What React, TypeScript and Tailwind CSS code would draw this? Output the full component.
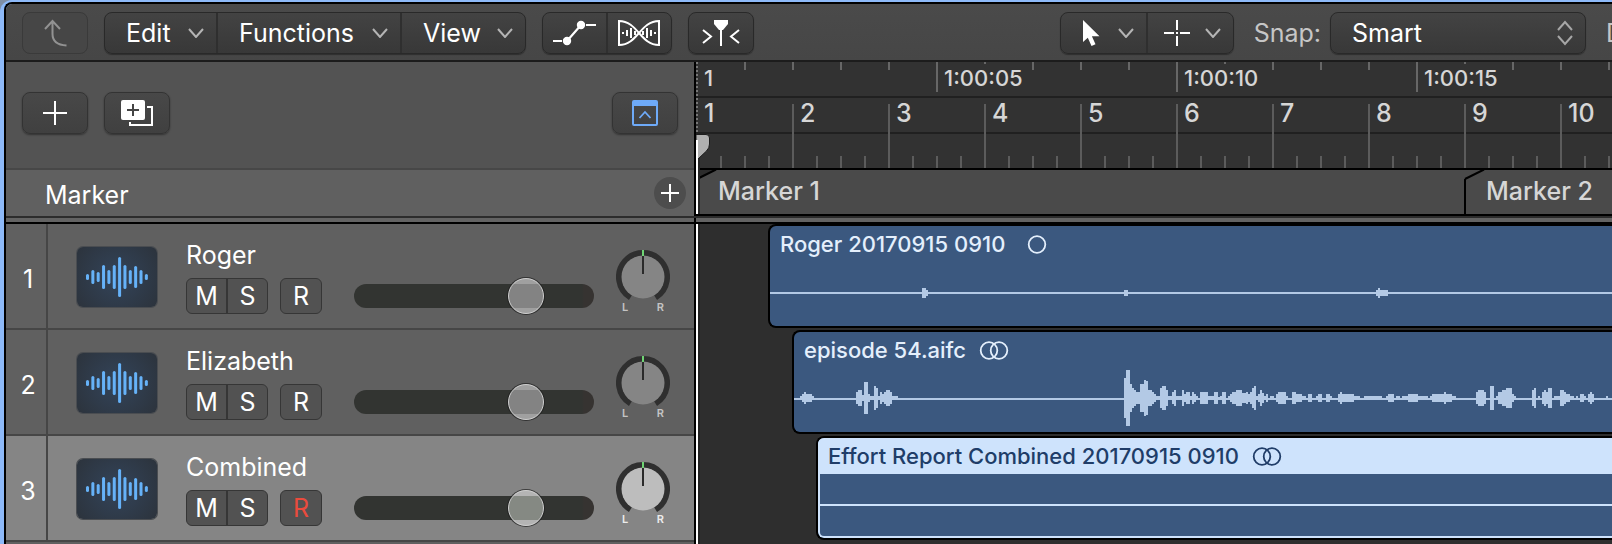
import type { ReactNode } from "react";
import clsx from "clsx";

type Segment = [x: number, width: number, half: number];

const SPARSE_WAVE: Segment[] = [
  [152, 4, 5], [156, 2, 3], [354, 4, 3], [606, 2, 3], [608, 2, 5], [610, 8, 3],
];

const SPEECH_WAVE: Segment[] = [
  [6, 2, 2], [8, 2, 4], [10, 2, 6], [12, 6, 4], [18, 2, 2], [62, 2, 6], [64, 4, 8], [68, 2, 3],
  [70, 4, 16], [74, 2, 4], [76, 4, 2], [80, 2, 12], [82, 2, 10], [84, 2, 2], [86, 2, 6], [88, 2, 4],
  [90, 2, 6], [92, 4, 8], [96, 2, 6], [98, 6, 2], [330, 2, 20], [332, 4, 28], [336, 2, 14],
  [338, 2, 10], [340, 2, 8], [342, 4, 6], [346, 4, 14], [350, 2, 18], [352, 2, 17], [354, 4, 8],
  [358, 2, 6], [360, 2, 4], [362, 4, 2], [366, 2, 10], [368, 4, 12], [372, 2, 8], [374, 4, 2],
  [378, 2, 6], [380, 2, 8], [382, 6, 2], [388, 2, 8], [390, 2, 4], [392, 4, 6], [396, 2, 2],
  [398, 2, 6], [400, 2, 4], [402, 2, 2], [406, 8, 6], [414, 6, 2], [420, 4, 6], [424, 2, 1],
  [426, 2, 2], [428, 4, 6], [434, 2, 2], [436, 2, 4], [438, 2, 6], [440, 2, 6], [442, 6, 8],
  [448, 4, 5], [452, 2, 6], [454, 2, 4], [456, 2, 6], [458, 2, 10], [460, 2, 12], [462, 2, 2],
  [464, 2, 4], [466, 2, 8], [468, 2, 5], [470, 2, 2], [472, 2, 4], [476, 4, 2], [482, 2, 4],
  [484, 8, 6], [492, 2, 2], [498, 4, 6], [502, 6, 4], [508, 4, 2], [514, 4, 4], [522, 2, 2],
  [524, 4, 4], [532, 4, 4], [536, 2, 2], [544, 2, 4], [546, 2, 6], [548, 12, 4], [560, 6, 2],
  [570, 18, 2], [592, 2, 2], [594, 6, 4], [602, 4, 2], [608, 6, 2], [614, 10, 4], [624, 10, 2],
  [636, 2, 2], [638, 12, 4], [650, 2, 6], [652, 6, 4], [658, 4, 2], [682, 2, 6], [684, 6, 8],
  [690, 2, 6], [696, 4, 12], [702, 2, 2], [704, 4, 6], [708, 4, 8], [712, 6, 10], [718, 2, 4],
  [720, 2, 2], [738, 2, 8], [740, 2, 10], [744, 2, 2], [748, 2, 6], [750, 2, 8], [752, 2, 6],
  [754, 4, 10], [760, 6, 2], [766, 4, 8], [770, 2, 6], [772, 4, 4], [776, 4, 2], [782, 2, 2],
  [786, 4, 4], [790, 2, 2], [794, 2, 4], [796, 2, 6], [798, 2, 4], [812, 2, 2],
];

interface Track {
  id: number;
  name: string;
  armed: boolean;
  selected: boolean;
  region: string;
  stereo: boolean;
  offset: string;
  center: number;
  wave: Segment[];
}

const TRACKS: Track[] = [
  { id: 1, name: "Roger", armed: false, selected: false, region: "Roger 20170915 0910", stereo: false, offset: "ml-[70px]", center: 31, wave: SPARSE_WAVE },
  { id: 2, name: "Elizabeth", armed: false, selected: false, region: "episode 54.aifc", stereo: true, offset: "ml-[94px]", center: 30, wave: SPEECH_WAVE },
  { id: 3, name: "Combined", armed: true, selected: true, region: "Effort Report Combined 20170915 0910", stereo: true, offset: "ml-[118px]", center: 31, wave: [] },
];

const BARS = Array.from({ length: 10 }, (_, i) => i + 1);
const TIMES = ["1", "1:00:05", "1:00:10", "1:00:15"];

const BUTTON_SKIN =
  "border border-[#292929] bg-linear-to-b from-[#434343] to-[#383838] shadow-[0_1px_1px_rgba(0,0,0,0.35)]";
const SOFT_SKIN =
  "border border-[#333333] bg-linear-to-b from-[#484848] to-[#404040] shadow-[0_1px_2px_rgba(0,0,0,0.4)]";

function Chevron() {
  return (
    <svg width="16" height="10" viewBox="0 0 16 10" fill="none" stroke="#b4b4b4" strokeWidth="2" aria-hidden="true">
      <path d="M1 1l7 8 7-8" />
    </svg>
  );
}

function Group({ children, label }: { children: ReactNode; label: string }) {
  return (
    <div role="group" aria-label={label} className={clsx("flex h-[42px] shrink-0 divide-x-2 divide-[#2f2f2f] overflow-hidden rounded-lg", BUTTON_SKIN)}>
      {children}
    </div>
  );
}

function MenuButton({ label, className }: { label: string; className: string }) {
  return (
    <button type="button" className={clsx("flex items-center justify-between pr-3 pl-[21px] text-[25px] leading-8 text-white", className)}>
      {label}
      <Chevron />
    </button>
  );
}

function Toolbar() {
  return (
    <div className="flex h-[58px] items-start overflow-hidden border-b-2 border-[#1c1c1c] bg-linear-to-b from-[#4a4a4a] to-[#464646] pt-2 pl-4">
      <button type="button" aria-label="Back" className="flex h-[42px] w-[66px] shrink-0 items-center justify-center rounded-lg border border-[#3a3a3a] bg-[#464646]">
        <svg width="24" height="28" viewBox="0 0 24 28" fill="none" stroke="#929292" strokeWidth="2" aria-hidden="true">
          <path d="M2 10L9.500 2l7.500 8M9.500 2v13c0 7 5 11 14 11.500" />
        </svg>
      </button>
      <div className="ml-4 flex gap-4">
        <Group label="Menus">
          <MenuButton label="Edit" className="w-[113px]" />
          <MenuButton label="Functions" className="w-[184px]" />
          <MenuButton label="View" className="w-[123px]" />
        </Group>
        <Group label="Modes">
          <button type="button" aria-label="Automation" className="flex w-[65px] items-center justify-center">
            <svg width="44" height="26" viewBox="0 0 44 26" stroke="#fff" strokeWidth="2" fill="#fff" aria-hidden="true">
              <path d="M-1 21h10M33 5h10M14 21L28 5" strokeWidth="2.200" />
              <circle cx="14" cy="21" r="3.200" />
              <circle cx="28" cy="5" r="3.200" />
            </svg>
          </button>
          <button type="button" aria-label="Flex" className="flex w-[63px] items-center justify-center pr-0.5">
            <svg width="42" height="26" viewBox="0 0 42 26" fill="none" stroke="#fff" strokeWidth="2" aria-hidden="true">
              <path d="M5 12v2M9 10v6M13 8v10M17 11v4M25 11v4M29 8v10M33 10v6M37 12v2" />
              <path d="M1 1v24C20 25 22 1 41 1v24C22 25 20 1 1 1z" />
            </svg>
          </button>
        </Group>
        <Group label="Catch">
          <button type="button" aria-label="Catch playhead" className="flex w-16 items-center justify-center">
            <svg width="38" height="26" viewBox="0 0 38 26" fill="none" stroke="#fff" strokeWidth="2" aria-hidden="true">
              <path d="M1 10l8 6.500L1 23M37 10l-8 6.500 8 6.500M19 4v22" />
              <path d="M12 0h14v4l-5 6h-4l-5-6z" fill="#fff" stroke="none" />
            </svg>
          </button>
        </Group>
      </div>
      <div className="flex-1" />
      <Group label="Tools">
        <button type="button" aria-label="Pointer tool" className="flex w-[87px] items-center justify-between pr-3 pl-[22px]">
          <svg width="17" height="26" viewBox="0 0 17 26" fill="#fff" aria-hidden="true">
            <path d="M0 0v22l4.800-4.300L8.500 26l4-1.800L8.900 16.200H16.500z" />
          </svg>
          <Chevron />
        </button>
        <button type="button" aria-label="Marquee tool" className="flex w-[85px] items-center justify-between pr-3 pl-4">
          <svg width="26" height="26" viewBox="0 0 26 26" stroke="#fff" strokeWidth="2" aria-hidden="true">
            <path d="M13 0v10M13 16v10M0 13h10M16 13h10M12 13h2" />
          </svg>
          <Chevron />
        </button>
      </Group>
      <label htmlFor="snap" className="ml-5 text-[25px] leading-[42px] text-[#c6c6c6]">
        Snap:
      </label>
      <div className={clsx("ml-[9px] flex h-[42px] w-64 shrink-0 items-center rounded-lg pr-3", BUTTON_SKIN)}>
        <select id="snap" defaultValue="Smart" className="h-full min-w-0 flex-1 appearance-none bg-transparent pl-[21px] text-[25px] leading-8 text-white">
          <option>Smart</option>
        </select>
        <svg width="16" height="26" viewBox="0 0 16 26" fill="none" stroke="#a6a6a6" strokeWidth="2" aria-hidden="true">
          <path d="M1 10l7-8 7 8M1 16l7 8 7-8" />
        </svg>
      </div>
      <span className="ml-5 w-1.5 shrink-0 overflow-hidden text-[25px] leading-[42px] text-[#c6c6c6]">D</span>
    </div>
  );
}

function HeaderControls() {
  const base = clsx("flex h-[42px] w-[66px] items-center justify-center rounded-lg", SOFT_SKIN);
  return (
    <div className="flex w-[690px] shrink-0 flex-col border-r-2 border-black bg-[#535353]">
      <div className="flex h-[108px] items-start gap-4 border-b-2 border-[#474747] px-4 pt-[30px]">
        <button type="button" aria-label="Add track" className={base}>
          <svg width="24" height="24" viewBox="0 0 24 24" stroke="#fff" strokeWidth="2" aria-hidden="true">
            <path d="M12 0v24M0 12h24" />
          </svg>
        </button>
        <button type="button" aria-label="Duplicate track" className={base}>
          <svg width="32" height="26" viewBox="0 0 32 26" fill="none" aria-hidden="true">
            <rect width="24" height="20" rx="2" fill="#fff" />
            <path d="M12 4v12M6 10h12" stroke="#444" strokeWidth="2" />
            <path d="M26 7h5v18H9v-3" stroke="#fff" strokeWidth="2" />
          </svg>
        </button>
        <button type="button" aria-label="Global tracks" className={clsx(base, "ml-auto")}>
          <svg width="26" height="26" viewBox="0 0 26 26" fill="none" stroke="#6eaaf8" strokeWidth="2" aria-hidden="true">
            <rect x="1" y="1" width="24" height="24" rx="1" />
            <path d="M1 1h24v5H1z" fill="#6eaaf8" stroke="none" />
            <path d="M7.500 18l5.500-6 5.500 6" strokeWidth="1.800" />
          </svg>
        </button>
      </div>
      <div className="flex h-[46px] items-center justify-between bg-[#606060] pr-2 pl-[39px]">
        <span className="pt-1 text-[25px] leading-8 text-white">Marker</span>
        <button type="button" aria-label="Add marker" className="flex size-8 items-center justify-center rounded-full bg-[#4d4d4d]">
          <svg width="18" height="18" viewBox="0 0 18 18" stroke="#fff" strokeWidth="2" aria-hidden="true">
            <path d="M9 0v18M0 9h18" />
          </svg>
        </button>
      </div>
    </div>
  );
}

function MarkerCell({ label, first, className }: { label: string; first?: boolean; className: string }) {
  return (
    <div className={clsx("relative flex h-11 items-center pb-0.5 pl-[22px] text-[25px] leading-8 font-medium text-[#d6d6d6]", className)}>
      <svg className="absolute top-0 left-0" width="22" height="44" viewBox="0 0 22 44" fill="none" stroke="#000" strokeWidth="2" aria-hidden="true">
        {first ? <path d="M0 0h20L2 9z" fill="#2c2c2c" stroke="none" /> : <path d="M1 9v35" />}
        <path d="M1 9L20 -0.500" />
      </svg>
      {label}
    </div>
  );
}

function Ruler() {
  return (
    <div className="relative min-w-0 flex-1 overflow-hidden bg-[#323232] text-[#d6d6d6]">
      <div className="flex h-9 overflow-hidden border-b-2 border-[#202020]">
        {TIMES.map((time, i) => (
          <div key={time} className="relative w-60 shrink-0 pt-1 pl-2 text-[22px] leading-6 font-medium">
            <svg className="absolute top-0 left-0" width="240" height="34" viewBox="0 0 240 34" fill="#676767" aria-hidden="true">
              {i > 0 && <rect width="2" height="30" />}
              <rect x="48" width="2" height={i > 0 ? 2 : 8} />
              <path d="M96 0h2v8h-2zM144 0h2v8h-2zM192 0h2v8h-2z" />
            </svg>
            {time}
          </div>
        ))}
      </div>
      <div className="flex h-[72px] overflow-hidden border-b-2 border-black bg-[linear-gradient(#323232_34px,#202020_34px,#202020_36px,#323232_36px)]">
        {BARS.map((bar) => (
          <div key={bar} className="relative w-24 shrink-0 pl-2 text-[25px] leading-[30px] font-medium">
            <svg className="absolute top-0 left-0" width="96" height="70" viewBox="0 0 96 70" fill="#5c5c5c" aria-hidden="true">
              <path d="M24 58h2v12h-2zM48 58h2v12h-2zM72 58h2v12h-2z" />
              {bar > 1 && <rect y="6" width="2" height="64" />}
            </svg>
            {bar}
          </div>
        ))}
      </div>
      <div className="flex overflow-hidden border-b-2 border-black bg-[#4a4a4a]">
        <MarkerCell label="Marker 1" first className="w-[768px] shrink-0" />
        <MarkerCell label="Marker 2" className="min-w-0 flex-1 whitespace-nowrap" />
      </div>
      <svg className="absolute top-0 left-0" width="16" height="154" viewBox="0 0 16 154" fill="none" aria-hidden="true">
        <path d="M1 0v72" stroke="#777" strokeWidth="2" strokeDasharray="2 2" />
        <path d="M3 96v56" stroke="#262626" strokeWidth="2" />
        <path d="M0 72.500h10q3.500 0 3.500 3.500v6q0 4-3 7L2 97H0z" fill="#b0b0b0" stroke="#1c1c1c" />
        <path d="M1 78v74" stroke="#fff" strokeWidth="2" />
      </svg>
    </div>
  );
}

const ICON_BARS = [6, 14, 10, 24, 14, 24, 40, 24, 14, 22, 14, 6];

function TrackIcon() {
  return (
    <svg className="mt-[23px] ml-[29px] shrink-0 rounded-md bg-[radial-gradient(circle,#33445a,#2c333c)] shadow-[0_0_0_1px_#4a4d51]" width="80" height="60" viewBox="0 0 80 60" aria-hidden="true">
      {ICON_BARS.map((h, i) => (
        <rect key={i} x={9 + i * 5.35} y={30 - h / 2} width="3" height={h} rx="1.500" fill="#66b2f8" />
      ))}
    </svg>
  );
}

function PanKnob({ name, selected }: { name: string; selected: boolean }) {
  return (
    <div role="img" aria-label={`${name} pan`} className="mt-[26px] ml-[22px] w-[54px] shrink-0">
      <svg width="54" height="51" viewBox="0 0 54 51" fill="none" aria-hidden="true">
        <path d="M14.500 47.500A24 24 0 1 1 39.500 47.500" stroke="#2f2f2f" strokeWidth="6" />
        <circle cx="27" cy="27" r="21.500" fill={selected ? "#bdbdbd" : "#858585"} />
        <path d="M27 0v6" stroke="#6fd474" strokeWidth="2" />
        <path d="M27 6v18" stroke="#2a2a2a" strokeWidth="2" />
      </svg>
      <div className={clsx("flex justify-between px-1.5 text-[11px] leading-3 font-semibold", selected ? "text-[#ececec]" : "text-[#c4c4c4]")}>
        <span>L</span>
        <span>R</span>
      </div>
    </div>
  );
}

function TrackHeader({ track }: { track: Track }) {
  const key = "flex h-full items-center justify-center text-[25px] leading-8";
  const box = "h-9 overflow-hidden rounded-md border border-[#363636] bg-[#525252] text-white";
  return (
    <div className={clsx("flex h-[106px] border-b-2 border-[#464646] text-white", track.selected ? "bg-[#858585]" : "bg-[#606060]")}>
      <div className="w-[42px] shrink-0 border-r-2 border-[#464646] pt-10 pl-1 text-center text-[25px] leading-[30px]">{track.id}</div>
      <TrackIcon />
      <div className="mt-4 ml-[29px] w-[136px] shrink-0">
        <div className="text-[25px] leading-[30px]">{track.name}</div>
        <div className="mt-2 flex gap-3">
          <div className={clsx(box, "flex w-[82px] divide-x-2 divide-[#363636]")}>
            <button type="button" aria-label={`Mute ${track.name}`} className={clsx(key, "flex-1")}>M</button>
            <button type="button" aria-label={`Solo ${track.name}`} className={clsx(key, "flex-1")}>S</button>
          </div>
          <div className={clsx(box, "flex w-[42px]")}>
            <button type="button" aria-label={`Record ${track.name}`} className={clsx(key, "flex-1", track.armed && "text-[#ea4b3d]")}>R</button>
          </div>
        </div>
      </div>
      <input
        type="range"
        aria-label={`${track.name} volume`}
        min={0}
        max={204}
        defaultValue={154}
        className={clsx(
          "mt-[54px] ml-8 h-9 w-60 shrink-0 appearance-none bg-transparent",
          "[&::-webkit-slider-runnable-track]:h-6 [&::-webkit-slider-runnable-track]:rounded-full [&::-webkit-slider-runnable-track]:bg-[linear-gradient(90deg,#323431_228px,#363331_230px)]",
          "[&::-webkit-slider-thumb]:-mt-1.5 [&::-webkit-slider-thumb]:size-9 [&::-webkit-slider-thumb]:appearance-none [&::-webkit-slider-thumb]:rounded-full [&::-webkit-slider-thumb]:border-[1px] [&::-webkit-slider-thumb]:border-[#d0d0d0] [&::-webkit-slider-thumb]:shadow-[0_0_0_1px_rgba(30,30,30,0.7)]",
          track.selected
            ? "[&::-webkit-slider-thumb]:bg-[linear-gradient(#b4b4b4_5px,#858983_5px,#858983_29px,#b4b4b4_29px)]"
            : "[&::-webkit-slider-thumb]:bg-[linear-gradient(#a0a0a0_5px,#838383_5px,#838383_29px,#a0a0a0_29px)]",
        )}
      />
      <PanKnob name={track.name} selected={track.selected} />
    </div>
  );
}

function Region({ track }: { track: Track }) {
  const tone = track.selected ? "#cee3fc" : "#b3c9e5";
  return (
    <div className="h-[106px]">
      <div className={clsx("relative h-[104px] overflow-hidden rounded-l-lg border-2 border-r-0 border-black bg-[#3b587f]", track.offset)}>
        <div className={clsx("flex h-9 items-center gap-3 pl-2.5 text-[22px] leading-7 font-medium whitespace-nowrap", track.selected ? "bg-[#cee3fc] text-[#203d68]" : "text-[#e4effc]")}>
          {track.region}
          <svg width="32" height="20" viewBox="0 0 32 20" fill="none" stroke="currentColor" strokeWidth="1.800" aria-hidden="true">
            <circle cx={track.stereo ? 11 : 20} cy="10.500" r="8.300" />
            {track.stereo && <circle cx="21" cy="10.500" r="8.300" />}
          </svg>
        </div>
        <svg className="w-full" height="64" fill={tone} shapeRendering="crispEdges" aria-hidden="true">
          <rect y="30" width="100%" height="2" />
          {track.wave.map(([x, width, half]) => (
            <rect key={x} x={x} y={track.center - half} width={width} height={half * 2} />
          ))}
        </svg>
        {track.selected && <div className="pointer-events-none absolute inset-0 rounded-l-md border-b-2 border-l-2 border-[#cee3fc]" />}
      </div>
    </div>
  );
}

export default function App() {
  return (
    <div className="min-h-screen bg-[#7f8fa6] font-['Inter',sans-serif]">
      <div className="flex min-h-screen flex-col overflow-hidden rounded-tl-xl bg-[#8db9f8] pt-0.5 pl-1">
        <div className="flex flex-1 flex-col overflow-hidden rounded-tl-lg border-t-2 border-l-2 border-black">
          <Toolbar />
          <div className="flex">
            <HeaderControls />
            <Ruler />
          </div>
          <div className="h-2 border-t-2 border-b-2 border-t-[#2c2c2c] border-b-black bg-[#636363]">
            <div className="h-full w-[690px] border-r-2 border-black" />
          </div>
          <div className="flex flex-1">
            <div className="w-[690px] shrink-0 border-r-2 border-black bg-[#606060]">
              {TRACKS.map((track) => (
                <TrackHeader key={track.id} track={track} />
              ))}
            </div>
            <div className="min-w-0 flex-1 overflow-hidden border-l-2 border-white bg-[#2e2e2e] shadow-[inset_2px_0_0_#222]">
              {TRACKS.map((track) => (
                <Region key={track.id} track={track} />
              ))}
            </div>
          </div>
        </div>
      </div>
    </div>
  );
}
